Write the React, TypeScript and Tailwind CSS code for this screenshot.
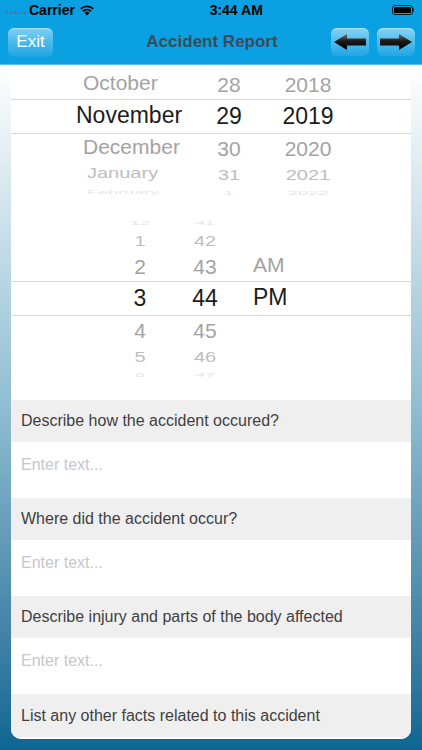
import React from "react";

const FONT = { fontFamily: '"Liberation Sans", Arial, sans-serif' };

function rowStyle(level: number) {
  switch (level) {
    case 0:
      return { h: "h-[35px] border-y border-[#d9d9d9]", t: "text-[23px] text-[#1c1c1c]" };
    case 1:
      return { h: "h-[29px]", t: "text-[21px] text-[#a3a3a3]" };
    case 2:
      return { h: "h-[23px]", t: "text-[20px] text-[#bdbdbd] scale-y-[0.72]" };
    default:
      return { h: "h-[13px]", t: "text-[18px] text-[#e6e6e6] scale-y-[0.3]" };
  }
}

function DateRow({ level, m, d, y }: { level: number; m: string; d: string; y: string }) {
  const s = rowStyle(level);
  const ml = level === 0 ? "pl-[65px]" : level === 1 ? "pl-[72px]" : "pl-[76px]";
  return (
    <div className={`flex items-center overflow-hidden ${s.h}`}>
      <div className={`w-[188px] shrink-0 ${ml}`}>
        <span className={`inline-block whitespace-nowrap leading-none ${s.t}`}>{m}</span>
      </div>
      <div className="w-[60px] shrink-0 flex justify-center">
        <span className={`inline-block whitespace-nowrap leading-none ${s.t}`}>{d}</span>
      </div>
      <div className="w-[98px] shrink-0 flex justify-center">
        <span className={`inline-block whitespace-nowrap leading-none ${s.t}`}>{y}</span>
      </div>
    </div>
  );
}

function TimeRow({ level, h, m, ap }: { level: number; h: string; m: string; ap?: string }) {
  const s = rowStyle(level);
  return (
    <div className={`flex items-center overflow-hidden ${s.h}`}>
      <div className="w-[99px] shrink-0" />
      <div className="w-[60px] shrink-0 flex justify-center">
        <span className={`inline-block whitespace-nowrap leading-none ${s.t}`}>{h}</span>
      </div>
      <div className="w-[70px] shrink-0 flex justify-center">
        <span className={`inline-block whitespace-nowrap leading-none ${s.t}`}>{m}</span>
      </div>
      <div className="pl-[13px]">
        <span className={`inline-block whitespace-nowrap leading-none ${s.t}`}>{ap ?? ""}</span>
      </div>
    </div>
  );
}

function Arrow({ dir }: { dir: "left" | "right" }) {
  const id = `g-${dir}`;
  return (
    <div className="w-[38px] h-[28px] rounded-[6px] bg-gradient-to-b from-[#86d3f4] via-[#4dbcec] to-[#1ea6e4] flex items-center justify-center shadow-[inset_0_1px_0_rgba(255,255,255,0.35)]">
      <svg width="32" height="16" viewBox="0 0 32 16" style={{ transform: dir === "right" ? "scaleX(-1)" : undefined }}>
        <defs>
          <linearGradient id={id} x1="0" y1="0" x2="0" y2="1">
            <stop offset="0" stopColor="#6a6a6a" />
            <stop offset="0.45" stopColor="#1a1a1a" />
            <stop offset="1" stopColor="#000000" />
          </linearGradient>
        </defs>
        <polygon points="0,8 13,0 13,4.5 32,4.5 32,11.5 13,11.5 13,16" fill={`url(#${id})`} />
      </svg>
    </div>
  );
}

function Field({ label }: { label: string }) {
  return (
    <>
      <div className="h-[42px] bg-[#efefef] flex items-center pl-[10px] text-[16px] text-[#3f3f3f]">{label}</div>
      <div className="h-[56px] bg-white pl-[10px] pt-[13px] text-[16px] text-[#c6c6cb] leading-[20px]">Enter text...</div>
    </>
  );
}

export default function App() {
  return (
    <div className="w-[422px] h-[750px] overflow-hidden flex flex-col" style={FONT}>
      {/* status bar */}
      <div className="h-[20px] bg-[#0aa0e2] flex items-center px-[5px] relative">
        <div className="flex items-center gap-[1.5px] mt-[4px]">
          {[0, 1, 2, 3, 4].map((i) => (
            <span key={i} className="w-[3px] h-[3px] rounded-full bg-[#3a7fae]" />
          ))}
        </div>
        <span className="ml-[3px] text-[14px] font-bold text-black leading-none">Carrier</span>
        <svg className="ml-[4px]" width="16" height="12" viewBox="0 0 16 12">
          <path d="M8 11.5 L5.6 8.9 A3.6 3.6 0 0 1 10.4 8.9 Z" fill="#000" />
          <path d="M3.4 6.6 A6.8 6.8 0 0 1 12.6 6.6 L11.3 8 A5 5 0 0 0 4.7 8 Z" fill="#000" />
          <path d="M1.1 4.2 A10 10 0 0 1 14.9 4.2 L13.7 5.5 A8.2 8.2 0 0 0 2.3 5.5 Z" fill="#000" />
        </svg>
        <div className="flex-1 flex justify-center">
          <span className="text-[14px] font-bold text-black leading-none mr-[14px]">3:44 AM</span>
        </div>
        <div className="flex items-center mr-[3px]">
          <div className="w-[21px] h-[10px] rounded-[3px] border border-[#1a1a1a] p-[1px]">
            <div className="w-full h-full rounded-[1.5px] bg-black" />
          </div>
          <div className="w-[1.5px] h-[4px] bg-[#333] rounded-r-sm" />
        </div>
      </div>

      {/* header */}
      <div className="h-[45px] bg-[#0aa0e2] flex items-center px-[8px] border-b border-[#5cc0ec]">
        <div className="w-[45px] h-[29px] rounded-[6px] bg-gradient-to-b from-[#7fd0f4] via-[#48b9eb] to-[#1ba5e3] flex items-center justify-center text-white text-[17px] shadow-[inset_0_1px_0_rgba(255,255,255,0.35)]">
          Exit
        </div>
        <div className="flex-1 flex justify-center">
          <span className="text-[17px] font-bold text-[#3a4b57] ml-[40px]">Accident Report</span>
        </div>
        <div className="flex gap-[8px] mr-[-1px]">
          <Arrow dir="left" />
          <Arrow dir="right" />
        </div>
      </div>

      {/* body */}
      <div className="flex-1 bg-gradient-to-b from-[#ffffff] via-[#8fbdd1] to-[#0a6691] px-[11px] pt-[1px] pb-[11px] flex flex-col">
        <div className="flex-1 bg-white rounded-[10px] overflow-hidden flex flex-col">
          {/* date picker */}
          <div className="pt-[4px] flex flex-col">
            <DateRow level={1} m="October" d="28" y="2018" />
            <DateRow level={0} m="November" d="29" y="2019" />
            <DateRow level={1} m="December" d="30" y="2020" />
            <DateRow level={2} m="January" d="31" y="2021" />
            <DateRow level={3} m="February" d="1" y="2022" />
          </div>
          {/* time picker */}
          <div className="mt-[17px] flex flex-col">
            <TimeRow level={3} h="12" m="41" />
            <TimeRow level={2} h="1" m="42" />
            <TimeRow level={1} h="2" m="43" ap="AM" />
            <TimeRow level={0} h="3" m="44" ap="PM" />
            <TimeRow level={1} h="4" m="45" />
            <TimeRow level={2} h="5" m="46" />
            <TimeRow level={3} h="6" m="47" />
          </div>
          <div className="h-[19px]" />
          <Field label="Describe how the accident occured?" />
          <Field label="Where did the accident occur?" />
          <Field label="Describe injury and parts of the body affected" />
          <div className="h-[43px] bg-[#efefef] flex items-center pl-[10px] text-[16px] text-[#3f3f3f] shrink-0">
            List any other facts related to this accident
          </div>
          <div className="flex-1 bg-white" />
        </div>
      </div>
    </div>
  );
}
